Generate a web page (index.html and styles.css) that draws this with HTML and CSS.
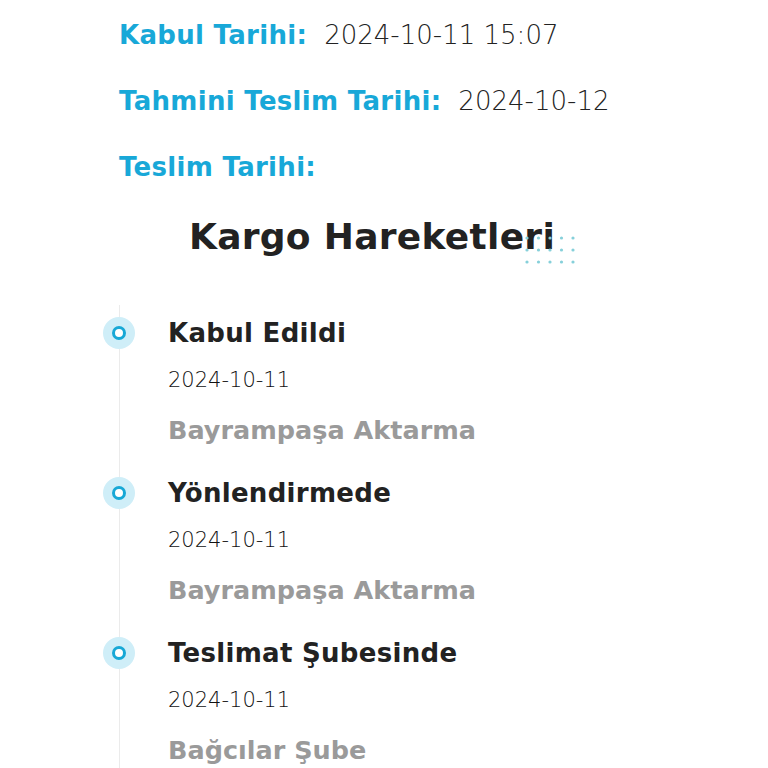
FILE: index.html
```
<!DOCTYPE html>
<html>
<head>
    <title>Kargo Takip</title>
    <link rel="stylesheet" href="styles.css">
</head>
<body>
    <div class="container">
        <div class="info">
            <div class="info-row">
                <span class="info-label">Kabul Tarihi:</span>
                <span class="info-value">2024-10-11 15:07</span>
            </div>
            <div class="info-row">
                <span class="info-label">Tahmini Teslim Tarihi:</span>
                <span class="info-value">2024-10-12</span>
            </div>
            <div class="info-row">
                <span class="info-label">Teslim Tarihi:</span>
                <span class="info-value"></span>
            </div>
        </div>

        <h2 class="section-title">
            <span class="title-text">Kargo Hareketleri
                <svg class="title-dots" width="52" height="30" viewBox="0 0 52 30">
                    <g fill="#86d0da">
                        <circle cx="2" cy="3" r="1.6"/><circle cx="13.5" cy="3" r="1.6"/><circle cx="25" cy="3" r="1.6"/><circle cx="36.5" cy="3" r="1.6"/><circle cx="48" cy="3" r="1.6"/>
                        <circle cx="2" cy="15" r="1.6"/><circle cx="13.5" cy="15" r="1.6"/><circle cx="25" cy="15" r="1.6"/><circle cx="36.5" cy="15" r="1.6"/><circle cx="48" cy="15" r="1.6"/>
                        <circle cx="2" cy="27" r="1.6"/><circle cx="13.5" cy="27" r="1.6"/><circle cx="25" cy="27" r="1.6"/><circle cx="36.5" cy="27" r="1.6"/><circle cx="48" cy="27" r="1.6"/>
                    </g>
                </svg>
            </span>
        </h2>

        <ul class="timeline">
            <li class="timeline-item">
                <span class="timeline-dot"></span>
                <div class="step-name">Kabul Edildi</div>
                <div class="step-date">2024-10-11</div>
                <div class="step-place">Bayrampaşa Aktarma</div>
            </li>
            <li class="timeline-item">
                <span class="timeline-dot"></span>
                <div class="step-name">Yönlendirmede</div>
                <div class="step-date">2024-10-11</div>
                <div class="step-place">Bayrampaşa Aktarma</div>
            </li>
            <li class="timeline-item">
                <span class="timeline-dot"></span>
                <div class="step-name">Teslimat Şubesinde</div>
                <div class="step-date">2024-10-11</div>
                <div class="step-place">Bağcılar Şube</div>
            </li>
        </ul>
    </div>
</body>
</html>
```

FILE: styles.css
```
body {
    font-family: "DejaVu Sans", Inter, sans-serif;
    background-color: #fff;
    margin: 0;
    padding: 0;
    overflow: hidden;
}

.container {
    padding: 2px 0 0 119px;
}

.info-row {
    display: flex;
    align-items: baseline;
    gap: 17px;
    height: 66px;
    line-height: 66px;
}

.info-label {
    color: #18a8d8;
    font-size: 26px;
    font-weight: 700;
    letter-spacing: 0.3px;
}

.info-value {
    color: #222;
    font-size: 26px;
    font-weight: 300;
}

.section-title {
    margin: 12px 0 43px -119px;
    padding-right: 24px;
    text-align: center;
    line-height: 50px;
    font-size: 36px;
    font-weight: 700;
    letter-spacing: 0.3px;
    color: #222;
}

.title-text {
    position: relative;
}

.title-dots {
    position: absolute;
    right: -22px;
    top: 19px;
}

.timeline {
    list-style: none;
    margin: 0;
    padding: 6px 0 0 48px;
    border-left: 1px solid #ebebeb;
}

.timeline-item {
    position: relative;
    height: 160px;
}

.timeline-dot {
    position: absolute;
    left: -65px;
    top: 6px;
    width: 32px;
    height: 32px;
    border-radius: 50%;
    background-color: #cfeef8;
}

.timeline-dot::after {
    content: "";
    position: absolute;
    left: 9px;
    top: 9px;
    width: 8px;
    height: 8px;
    border: 3.5px solid #17a8d6;
    border-radius: 50%;
    background-color: #fff;
}

.step-name {
    line-height: 44px;
    font-size: 26px;
    font-weight: 700;
    letter-spacing: 0.3px;
    color: #222;
}

.step-date {
    line-height: 50px;
    font-size: 21px;
    font-weight: 300;
    color: #111;
}

.step-place {
    line-height: 50px;
    font-size: 25.5px;
    font-weight: 700;
    color: #9a9a9a;
}
```
